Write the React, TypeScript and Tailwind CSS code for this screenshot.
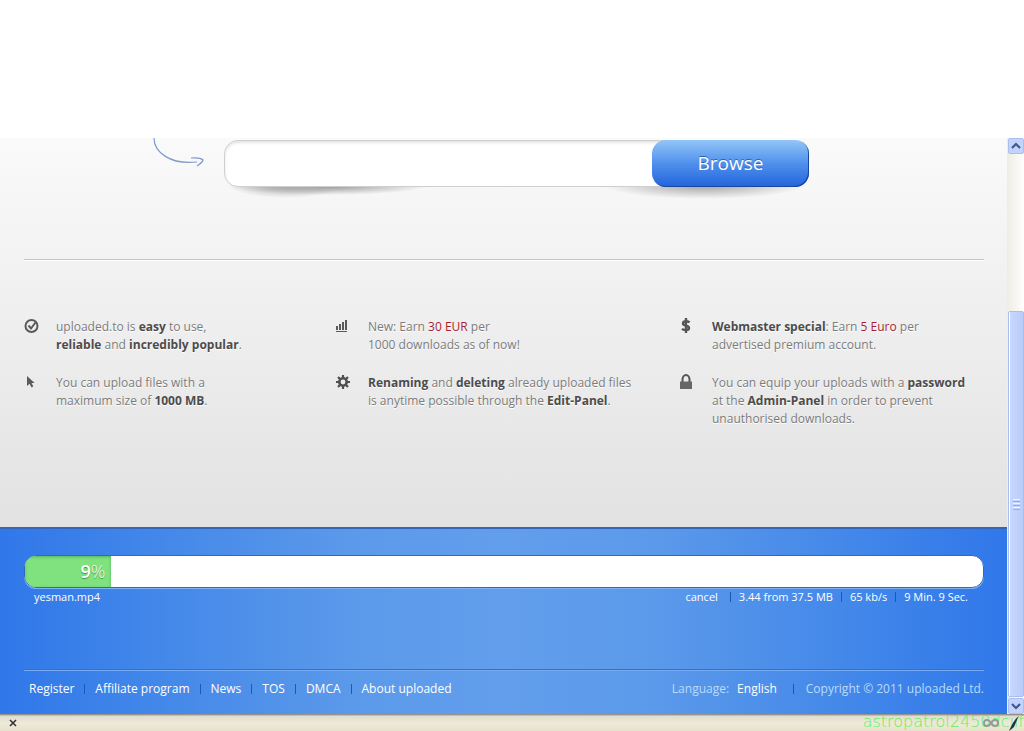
import type { ReactNode } from 'react';

interface FeatureProps {
    icon: ReactNode;
    children: ReactNode;
}

const footerLinks = ['Register', 'Affiliate program', 'News', 'TOS', 'DMCA', 'About uploaded'];

const upload = {
    name: 'yesman.mp4',
    percent: 9,
    stats: ['3.44 from 37.5 MB', '65 kb/s', '9 Min. 9 Sec.'],
};

function Feature({ icon, children }: FeatureProps) {
    return (
        <div className="flex">
            <div className="w-8 shrink-0">{icon}</div>
            <p className="whitespace-nowrap">{children}</p>
        </div>
    );
}

function Bold({ children }: { children: ReactNode }) {
    return <strong className="font-bold text-[#4c4c4c]">{children}</strong>;
}

function Divider() {
    return <span className="h-[10px] w-px bg-[#1f58b4]" />;
}

function CheckIcon() {
    return (
        <svg width="16" height="18" viewBox="0 0 16 18" fill="none" stroke="#5a5a5a">
            <circle cx="7.500" cy="8" r="6" strokeWidth="2" />
            <path d="M4.500 7.500 7 10.500 11.500 4.500" strokeWidth="2" />
        </svg>
    );
}

function CursorIcon() {
    return (
        <svg width="16" height="18" viewBox="0 0 16 18" fill="#5a5a5a">
            <path d="M3 2v10l2.600-2.200L7.500 13.500l1.800-.9-1.700-3.600h3z" />
        </svg>
    );
}

function ChartIcon() {
    return (
        <svg width="16" height="18" viewBox="0 0 16 18" fill="#5a5a5a">
            <path d="M0 8h2v4H0zM3 6h2v6H3zM6 4h2v8H6zM9 2h2v10H9zM0 13h11v1H0z" />
        </svg>
    );
}

function GearIcon() {
    return (
        <svg width="16" height="18" viewBox="0 0 16 18" fill="none" stroke="#505050">
            <circle cx="7" cy="8" r="3.700" strokeWidth="2.600" />
            <path d="M7 1v3M7 12v3M0 8h3M11 8h3M2 3l2 2M10 11l2 2M12 3l-2 2M4 11l-2 2" strokeWidth="2.200" />
        </svg>
    );
}

function DollarIcon() {
    return (
        <svg width="16" height="18" viewBox="0 0 16 18" fill="none" stroke="#555" strokeWidth="2.400">
            <path d="M9.500 4.500C8.500 3 3 2.500 3 5.500c0 3 6 1.500 6 4.500 0 3-5.500 2.500-7 .8M6 0v15" />
        </svg>
    );
}

function LockIcon() {
    return (
        <svg width="16" height="18" viewBox="0 0 16 18" fill="none">
            <path d="M2.500 8V5.500a3.500 4.500 0 0 1 7 0V8" stroke="#555" strokeWidth="2" />
            <path d="M0 7.500h12V15H0z" fill="#666" />
        </svg>
    );
}

function UploadForm() {
    return (
        <div className="flex items-start pt-[2px]">
            <svg className="ml-[129px] mr-5 -mt-[2px] shrink-0" width="51" height="32" viewBox="0 0 51 32" fill="none" stroke="#7f9acb">
                <path d="M1 0C1 14 17 27 44 24M38 20c5-.5 10 0 12 2-.5 2-3 4-6 6" strokeWidth="1.200" />
            </svg>
            <form className="relative flex h-[47px] max-w-[585px] flex-1">
                <span className="absolute inset-x-0 top-[40px] h-[20px] bg-[radial-gradient(ellipse_58px_13px_at_62px_5px,#a8a8a8,transparent),radial-gradient(ellipse_100px_9px_at_104px_6px,#969696,transparent),radial-gradient(ellipse_100px_14px_at_480px_5px,#9f9f9f,transparent)]" />
                <input
                    aria-label="File"
                    className="relative -mr-5 min-w-0 flex-1 rounded-l-[14px] border border-[#cfcfcf] bg-white px-4 shadow-[inset_0_2px_3px_#e4e4e4] outline-none"
                />
                <button
                    type="button"
                    className="relative w-[157px] rounded-[14px] bg-linear-to-b from-[#93c5f6] via-[#4f90ec] to-[#2363dc] text-[19px] font-medium text-white shadow-[inset_-1px_-1px_0_#1c459c] [text-shadow:0_-1px_0_#2d62b4]"
                >
                    Browse
                </button>
            </form>
        </div>
    );
}

function Features() {
    return (
        <div className="grid grid-cols-[312fr_344fr_304fr] gap-y-5 text-[12px] leading-[18px] text-[#7b7b7b] [text-shadow:0_1px_0_#fff]">
            <Feature icon={<CheckIcon />}>
                uploaded.to is <Bold>easy</Bold> to use,
                <br />
                <Bold>reliable</Bold> and <Bold>incredibly popular</Bold>.
            </Feature>
            <Feature icon={<ChartIcon />}>
                New: Earn <span className="text-[#a51c2c]">30 EUR</span> per
                <br />
                1000 downloads as of now!
            </Feature>
            <Feature icon={<DollarIcon />}>
                <Bold>Webmaster special</Bold>: Earn <span className="text-[#a51c2c]">5 Euro</span> per
                <br />
                advertised premium account.
            </Feature>
            <Feature icon={<CursorIcon />}>
                You can upload files with a
                <br />
                maximum size of <Bold>1000 MB</Bold>.
            </Feature>
            <Feature icon={<GearIcon />}>
                <Bold>Renaming</Bold> and <Bold>deleting</Bold> already uploaded files
                <br />
                is anytime possible through the <Bold>Edit-Panel</Bold>.
            </Feature>
            <Feature icon={<LockIcon />}>
                You can equip your uploads with a <Bold>password</Bold>
                <br />
                at the <Bold>Admin-Panel</Bold> in order to prevent
                <br />
                unauthorised downloads.
            </Feature>
        </div>
    );
}

function UploadProgress() {
    return (
        <div>
            <div className="flex h-[33px] overflow-hidden rounded-[12px] border border-[#3468bd] bg-white shadow-[0_1px_0_#7fb2f4]">
                <div
                    className="flex items-center justify-end bg-[#7fe27f] pr-[6px] text-[18px] text-white shadow-[inset_0_1px_3px_#54b060] [text-shadow:0_1px_1px_#3f8f48]"
                    style={{ width: `${upload.percent}%` }}
                >
                    <b className="font-semibold">{upload.percent}</b>
                    <span className="font-light">%</span>
                </div>
            </div>
            <div className="flex h-[18px] items-center justify-between pl-[10px] pr-4 text-[11px]">
                <span>{upload.name}</span>
                <div className="flex items-center gap-2">
                    <button type="button" className="mr-1">cancel</button>
                    {upload.stats.map((stat) => (
                        <span key={stat} className="flex items-center gap-2">
                            <Divider />
                            {stat}
                        </span>
                    ))}
                </div>
            </div>
        </div>
    );
}

function Footer() {
    return (
        <footer className="flex h-[39px] items-center justify-between border-t border-[#3470cf] pl-[5px] text-[12px] shadow-[inset_0_1px_0_#76aaf2]">
            <nav className="flex items-center gap-[10px]">
                {footerLinks.map((link, index) => (
                    <span key={link} className="flex items-center gap-[10px]">
                        {index > 0 && <Divider />}
                        <a href="#">{link}</a>
                    </span>
                ))}
            </nav>
            <div className="flex items-center text-[#b9dcfb]">
                <span className="mr-2">Language:</span>
                <a href="#" className="mr-4 text-white">English</a>
                <Divider />
                <span className="ml-3">Copyright © 2011 uploaded Ltd.</span>
            </div>
        </footer>
    );
}

function ScrollButton({ label, path }: { label: string; path: string }) {
    return (
        <button
            type="button"
            aria-label={label}
            className="flex h-4 w-full shrink-0 items-center justify-center rounded-[2px] border border-[#a9bff0] bg-[#c3d3fb]"
        >
            <svg width="10" height="8" viewBox="0 0 10 8" fill="none" stroke="#3f5a90" strokeWidth="2.200">
                <path d={path} />
            </svg>
        </button>
    );
}

function Scrollbar() {
    return (
        <div className="flex w-[17px] shrink-0 flex-col bg-linear-to-r from-[#eeede5] to-[#fefefb] pl-px">
            <ScrollButton label="Scroll up" path="M1 6 5 2l4 4" />
            <div className="flex flex-1 flex-col justify-end pb-px">
                <div className="flex h-[71%] flex-col items-center justify-center gap-px rounded-[2px] border border-[#a9bdf0] bg-linear-to-r from-[#cad8fd] to-[#b9cbfa] shadow-[inset_1px_0_0_#fff]">
                    <i className="h-px w-[7px] bg-[#eef4fe]" />
                    <i className="h-px w-[7px] bg-[#8cb0f8]" />
                    <i className="h-px w-[7px] bg-[#eef4fe]" />
                    <i className="h-px w-[7px] bg-[#8cb0f8]" />
                    <i className="h-px w-[7px] bg-[#eef4fe]" />
                    <i className="h-px w-[7px] bg-[#8cb0f8]" />
                </div>
            </div>
            <ScrollButton label="Scroll down" path="M1 2l4 4 4-4" />
        </div>
    );
}

function StatusBar() {
    return (
        <div className="relative flex h-[17px] items-center border-t border-[#96948a] bg-linear-to-b from-[#dedbcf] via-[#edead9] to-[#e6e2ca] pl-[9px] shadow-[inset_0_1px_0_#c2bfb4]">
            <button type="button" aria-label="Close">
                <svg width="8" height="8" viewBox="0 0 8 8" stroke="#333" strokeWidth="1.600">
                    <path d="M1 1l6 6M7 1 1 7" />
                </svg>
            </button>
            <span className="absolute bottom-0 right-0 whitespace-nowrap font-['DejaVu_Sans'] text-[16px] font-extralight leading-[19px] text-[#5cf05c]">
                astropatrol2450dcjif
            </span>
            <svg className="absolute right-0 top-0" width="42" height="16" viewBox="0 0 42 16" fill="none">
                <path d="M9 8c-2-4-7-4-7 0s5 4 7 0 7-4 7 0-5 4-7 0z" stroke="#999" strokeWidth="2" />
                <path d="M37 1c-4 3-7 8-10 15l5-4c2-4 3-8 5-11z" fill="#243447" />
            </svg>
        </div>
    );
}

export default function App() {
    return (
        <div className="flex min-h-screen flex-col bg-white pt-[138px] font-['Open_Sans',sans-serif]">
            <div className="flex flex-1">
                <div className="flex min-w-0 flex-1 flex-col">
                    <main className="flex-1 bg-linear-to-b from-[#fafafa] to-[#e2e2e2] pl-6 pr-[23px]">
                        <UploadForm />
                        <hr className="mb-[58px] mt-[72px] border-[#c4c4c4] shadow-[0_1px_0_#fff]" />
                        <Features />
                    </main>
                    <section className="border-t-2 border-[#3566b6] bg-[linear-gradient(to_right,#3077ea,#4287e9_15%,#5b99ea_35%,#629eec_50%,#5b99ea_65%,#4287e9_85%,#3077ea)] pb-[6px] pl-6 pr-[23px] pt-[26px] text-white">
                        <UploadProgress />
                        <div className="h-[63px]" />
                        <Footer />
                    </section>
                </div>
                <Scrollbar />
            </div>
            <StatusBar />
        </div>
    );
}
